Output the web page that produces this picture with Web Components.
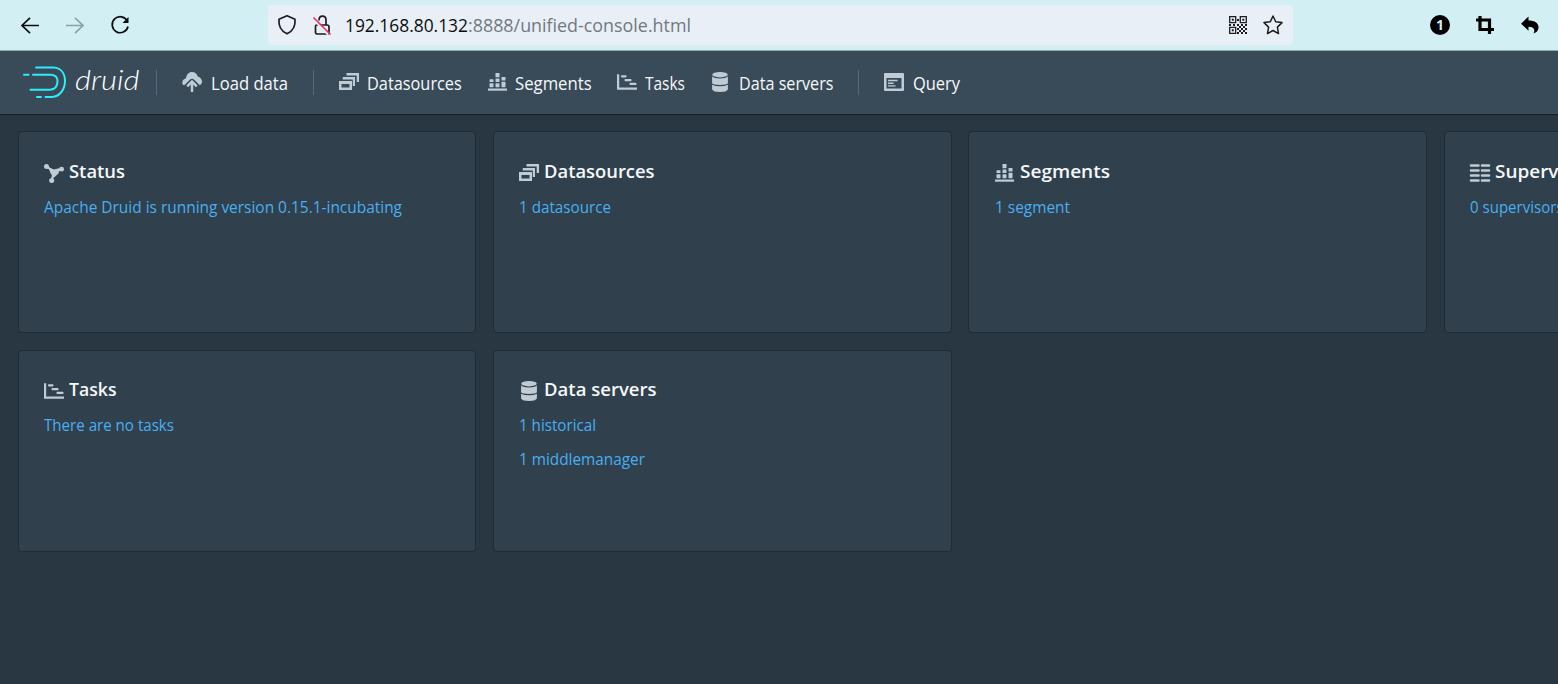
<!DOCTYPE html>
<html lang="en">
<head>
<meta charset="utf-8">
<title>Apache Druid</title>
<style>
html,body{margin:0;height:100%;overflow:hidden;background:#293742}
body{font-family:"Open Sans","Noto Sans",sans-serif}
</style>
</head>
<body>
<druid-app></druid-app>
<script>
const ICONS = {
  load: '<path d="M.7 12.500C-.2 9.500 1 7 4 6.200C4.500 2.500 7 0 10 0c2.800 0 5 1.700 5.700 4.400C18.400 5 20 7.200 20 9.500c0 1.800-.8 3-2.200 3.700L12.200 7.800Q10 5.800 7.800 7.800L2.600 13.100C1.700 13.200 1.100 13 .7 12.500z"/><path d="M5.200 14.300 10 9.600l4.800 4.700M10 10v10" fill="none" stroke="currentColor" stroke-width="2.500"/>',
  data: '<g transform="translate(0 1)"><path fill-rule="evenodd" d="M0 8h13v9H0zM2.500 11v3.500h8V11zM3.800 4H16v9h-2.200V6.500H3.800zM7.500 0H20v9h-2.300V2.500H7.500z"/></g>',
  seg: '<g transform="translate(0 1)"><path d="M0 15.500h19v2.200H0z"/><rect x="1.500" y="6.300" width="4" height="2.800" rx=".6"/><rect x="1.500" y="10.200" width="4" height="4" rx=".6"/><rect x="7.500" y="0" width="4" height="4.300" rx=".6"/><rect x="7.500" y="5.500" width="4" height="3.500" rx=".6"/><rect x="7.500" y="10.200" width="4" height="4" rx=".6"/><rect x="13.500" y="4" width="4" height="3.500" rx=".6"/><rect x="13.500" y="8.800" width="4" height="5.400" rx=".6"/></g>',
  task: '<g transform="translate(0 1)"><path d="M0 1.200h2.200v13.300H20v2.300H0z"/><rect x="4" y="2.200" width="5.500" height="2.200" rx=".8"/><rect x="7.500" y="6" width="7" height="2.200" rx=".8"/><rect x="12.500" y="9.800" width="7" height="2.200" rx=".8"/></g>',
  db: '<ellipse cx="10" cy="2.700" rx="7.700" ry="2.700"/><path d="M2.100 4.300Q4 6.500 10 6.500T17.900 4.300v7Q17 13 10 13T2.100 11.300z"/><path d="M2.100 12.800Q5 14.300 10 14.300T17.900 12.800v4.700Q16.500 20 10 20T2.100 17.500z"/>',
  query: '<path fill-rule="evenodd" d="M1 1h18q1 0 1 1v16q0 1-1 1H1q-1 0-1-1V2Q0 1 1 1zM2.500 6v10.500h15V6z"/><path d="M4 8.500h9.500M4 11.200h5.500M4 13.900h7.500" fill="none" stroke="currentColor" stroke-width="1.400"/>',
  status: '<g transform="translate(0 1)"><path d="M2.500 2.700 10 7.500l7.500-2M9.500 9 7.700 16.500" fill="none" stroke="currentColor" stroke-width="2"/><path d="M4 3l6 2.500L16 4l-1.500 5.500-5 4.500-3-5z"/><circle cx="2.500" cy="2.500" r="2.500"/><circle cx="17.600" cy="5.200" r="2.400"/><circle cx="7.700" cy="16.400" r="2.500"/></g>',
  sup: '<path d="M1 2.500h7.500M1 7.500h7.500M1 12.500h7.500M1 17.500h7.500M12 2.500h7M12 7.500h7M12 12.500h7M12 17.500h7" stroke="currentColor" stroke-width="2.600" stroke-linecap="round"/>',
  back: '<path d="M19 10.500H2M10 2.800 2 10.500l8 7.700" fill="none" stroke="currentColor" stroke-width="1.700"/>',
  fwd: '<path d="M1 10.500h17M10 2.800l8 7.700-8 7.700" fill="none" stroke="currentColor" stroke-width="1.700"/>',
  reload: '<path d="M17.300 6A8 8 0 1 0 18 11.500" fill="none" stroke="currentColor" stroke-width="1.700"/><path d="M18.500 2v6H12.500z"/>',
  shield: '<path d="M10 .8 18 4.300Q19 14.500 10 18.800Q1 14.500 2 4.300z" fill="none" stroke="currentColor" stroke-width="1.700" stroke-linejoin="round"/>',
  lock: '<g transform="translate(1 0)"><path d="M3.500 10h10.500q2 0 2 2v5.500q0 1.500-1.500 1.500H4Q2.500 19 2.500 17.500V11.500Q2.500 10 3.500 10zM6 5.500Q6 1.200 9.500 1.200T13 5v5" fill="none" stroke="currentColor" stroke-width="1.700"/><path d="M0 4 15 19.500" stroke="#e8eff6" stroke-width="2"/><path d="M.5 2.500 17.500 19.500" stroke="#f5295a" stroke-width="1.600"/></g>',
  star: '<path d="M10 1l2.700 5.800 6.300.8-4.600 4.500 1.100 6.500L10 15.500l-5.500 3.100 1.100-6.500L1 7.600l6.300-.8z" fill="none" stroke="currentColor" stroke-width="1.500" stroke-linejoin="round"/>',
  qr: '<path d="M1.700 1.700h6v6h-6zM12.300 1.700h6v6h-6zM1.700 12.300h6v6h-6z" fill="none" stroke="currentColor" stroke-width="1.300"/><path d="M3.800 3.800h2v2h-2zM14.300 3.800h2v2h-2zM3.800 14.300h2v2h-2zM9 4h2v2H9zM1 9h2v2H1zM5 9h2v2H5zM9 9h2v2H9zM11 11h2v2h-2zM13 9h2v2h-2zM17 9h2v2h-2zM15 11h2v2h-2zM9 13h2v2H9zM13 13h2v2h-2zM17 13h2v2h-2zM11 15h2v2h-2zM15 15h2v2h-2zM9 17h2v2H9zM13 17h2v2h-2zM17 17h2v2h-2z"/>',
  crop: '<path d="M5 1v13.500h14M1 5h13.500V19" fill="none" stroke="currentColor" stroke-width="3.200"/>',
  undo: '<path d="M8.500 1.500v4C15 5.500 19 8.500 18.500 13q-.5 4-5 5.500Q16.500 12 8.500 11.700v4L1 8.700z"/>'
};

class UiIcon extends HTMLElement {
  constructor() {
    super();
    this.attachShadow({mode: 'open'}).innerHTML =
      `<style>:host{display:block;width:20px;height:20px;flex:none}svg{display:block;overflow:visible}</style>
       <svg width="20" height="20" viewBox="0 0 20 20" fill="currentColor">${ICONS[this.getAttribute('name')]}</svg>`;
  }
}
customElements.define('ui-icon', UiIcon);

/* A single line of text condensed to a set measure. */
class FitText extends HTMLElement {
  constructor() {
    super();
    this.attachShadow({mode: 'open'}).innerHTML =
      `<style>:host{display:block;white-space:nowrap;flex:none}span{display:inline-block;transform-origin:0 0}</style><span><slot></slot></span>`;
  }
  connectedCallback() {
    const w = +this.getAttribute('w'), s = this.shadowRoot.querySelector('span');
    const natural = s.getBoundingClientRect().width;
    this.style.width = w + 'px';
    if (natural) s.style.transform = `scaleX(${w / natural})`;
  }
}
customElements.define('fit-text', FitText);

class BrowserBar extends HTMLElement {
  constructor() {
    super();
    this.attachShadow({mode: 'open'}).innerHTML = `<style>
      :host{display:flex;box-sizing:border-box;height:51px;background:#d2eff3;border-bottom:1px solid #97a7ad;color:#0c0c0d;align-items:center;padding:0 18px 0 20px}
      .nav,.tools{display:flex;gap:25px;align-items:center}
      .off{color:#8ba1a6}
      .url{display:flex;align-items:center;box-sizing:border-box;width:1025px;height:40px;margin-left:138px;padding:0 10px 0 9px;border-radius:4px;background:#e8eff6;color:#1c1c20}
      .url ui-icon+ui-icon{margin-left:15px}
      .addr{display:flex;margin:0 auto 0 13px;font-size:17.6px;line-height:26px;color:#0c0c0d}
      .addr .rest{color:#72797f}
      .tools{margin-left:auto;color:#000}
      .badge{width:20px;height:20px;border-radius:50%;background:#000;color:#d2eff3;font:bold 14px/20px "Open Sans",sans-serif;text-align:center}
    </style>
    <div class="nav"><ui-icon name="back"></ui-icon><ui-icon class="off" name="fwd"></ui-icon><ui-icon name="reload"></ui-icon></div>
    <div class="url"><ui-icon name="shield"></ui-icon><ui-icon name="lock"></ui-icon>
      <div class="addr"><fit-text w="123">192.168.80.132</fit-text><fit-text class="rest" w="223">:8888/unified-console.html</fit-text></div>
      <ui-icon name="qr"></ui-icon><ui-icon name="star"></ui-icon></div>
    <div class="tools"><div class="badge">1</div><ui-icon name="crop"></ui-icon><ui-icon name="undo"></ui-icon></div>`;
  }
}
customElements.define('browser-bar', BrowserBar);

class DruidLogo extends HTMLElement {
  constructor() {
    super();
    this.attachShadow({mode: 'open'}).innerHTML = `<style>
      :host{display:flex;width:117px;height:36px;color:#fff}
      svg{flex:none}
      fit-text{margin:-3px 0 0 8px;font:italic 300 28px/34px Lato,sans-serif}
    </style>
    <svg width="44" height="34" viewBox="0 0 44 34" fill="none" stroke="#2ceefb" stroke-width="2" stroke-linecap="round">
      <path d="M13 2.500h17.500C38 3 42 8.500 42 16s-4.500 15.500-13 16h-6.500M1 9.700h4.500M10 9.700h18c4.500.3 6.500 3 6.500 6.300 0 5-2.500 8.500-7.500 8.700H7.500M14 32h4"/>
    </svg><fit-text w="64.500">druid</fit-text>`;
  }
}
customElements.define('druid-logo', DruidLogo);

class NavItem extends HTMLElement {
  constructor() {
    super();
    this.attachShadow({mode: 'open'}).innerHTML = `<style>
      :host{display:flex;align-items:center;height:38px;padding:0 12.500px;color:#f5f8fa;font-size:17.500px;line-height:24px}
      ui-icon{color:#bfccd6;margin:-2px 8.500px 0 0}
      ui-icon[name=seg]{margin:-2px 7.500px 0 1px}
    </style><ui-icon name="${this.getAttribute('icon')}"></ui-icon><fit-text w="${this.getAttribute('w')}"><slot></slot></fit-text>`;
  }
}
customElements.define('nav-item', NavItem);

class HeaderBar extends HTMLElement {
  constructor() {
    super();
    this.attachShadow({mode: 'open'}).innerHTML = `<style>
      :host{display:flex;align-items:center;box-sizing:border-box;height:63px;padding-left:23px;background:#394b59;box-shadow:0 0 0 1px rgba(16,22,26,.35),0 1px 1px rgba(16,22,26,.4);position:relative}
      :host{clip-path:inset(0 0 -3px 0)}
      i{width:1px;height:25px;margin:0 12.500px;background:#5a6975}
      i:first-of-type{margin-left:16px}
    </style>
    <druid-logo></druid-logo><i></i>
    <nav-item icon="load" w="77">Load data</nav-item><i></i>
    <nav-item icon="data" w="94.800">Datasources</nav-item>
    <nav-item icon="seg" w="76.700">Segments</nav-item>
    <nav-item icon="task" w="40">Tasks</nav-item>
    <nav-item icon="db" w="94.500">Data servers</nav-item><i></i>
    <nav-item icon="query" w="47">Query</nav-item>`;
  }
}
customElements.define('header-bar', HeaderBar);

class HomeCard extends HTMLElement {
  constructor() {
    super();
    this.attachShadow({mode: 'open'}).innerHTML = `<style>
      :host{display:block;box-sizing:border-box;height:202px;padding:25px 25.200px;border:1px solid #202b33;border-radius:4px;background:#30404d}
      h5{display:flex;margin:2.600px 0 12px;color:#f5f8fa;font-size:18.700px;font-weight:600;line-height:24px}
      ui-icon{color:#bfccd6;margin:3px 5.200px 0 0}
      h5 fit-text{margin-top:-1px}
      ::slotted(fit-text){margin-top:10px;color:#48aff0;font-size:15.600px;line-height:24px}
    </style>
    <h5><ui-icon name="${this.getAttribute('icon')}"></ui-icon><fit-text w="${this.getAttribute('w')}">${this.getAttribute('label')}</fit-text></h5><slot></slot>`;
  }
}
customElements.define('home-card', HomeCard);

class DruidApp extends HTMLElement {
  constructor() {
    super();
    this.attachShadow({mode: 'open'}).innerHTML = `<style>
      :host{display:block}
      main{display:grid;grid-template-columns:repeat(4,458.500px);gap:16.400px 16.900px;padding:17.400px 0 17px 17.620px;overflow:hidden}
    </style>
    <browser-bar></browser-bar><header-bar></header-bar>
    <main>
      <home-card icon="status" label="Status" w="56"><fit-text w="358">Apache Druid is running version 0.15.1-incubating</fit-text></home-card>
      <home-card icon="data" label="Datasources" w="110.500"><fit-text w="92">1 datasource</fit-text></home-card>
      <home-card icon="seg" label="Segments" w="90"><fit-text w="75">1 segment</fit-text></home-card>
      <home-card icon="sup" label="Supervisors" w="107"><fit-text w="93.500">0 supervisors</fit-text></home-card>
      <home-card icon="task" label="Tasks" w="47.500"><fit-text w="130">There are no tasks</fit-text></home-card>
      <home-card icon="db" label="Data servers" w="112.500"><fit-text w="77">1 historical</fit-text><fit-text w="126">1 middlemanager</fit-text></home-card>
    </main>`;
  }
}
customElements.define('druid-app', DruidApp);
</script>
</body>
</html>
